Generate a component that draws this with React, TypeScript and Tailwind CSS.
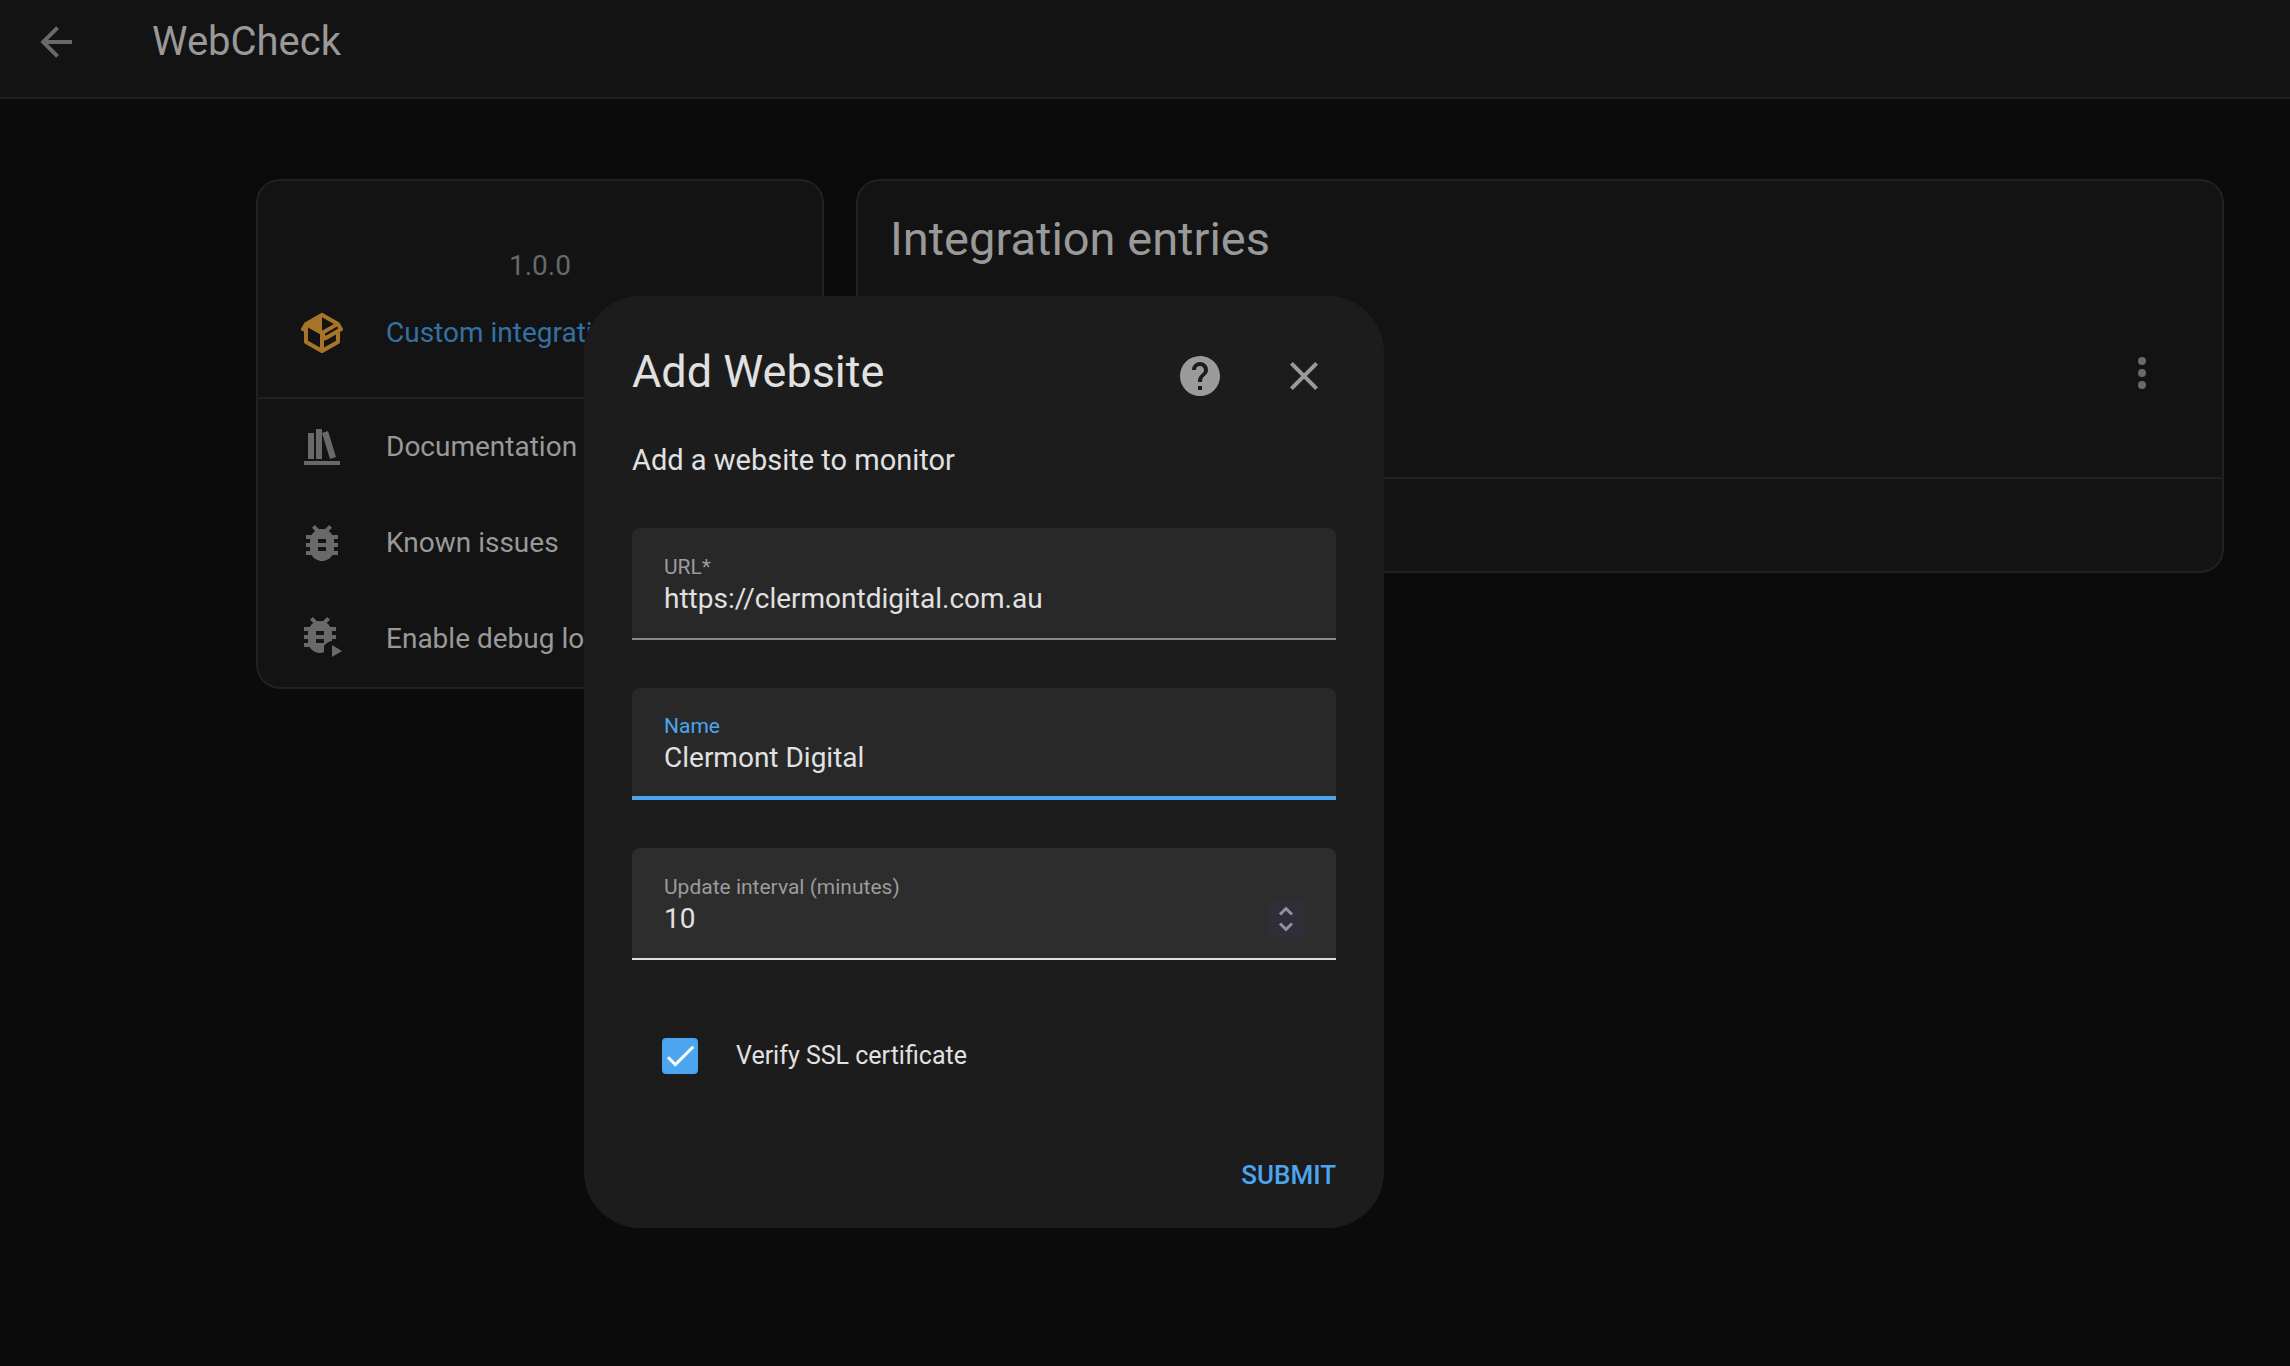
import React, { useState } from "react";

const paths = {
  back: "M20,11V13H8L13.5,18.5L12.08,19.92L4.16,12L12.08,4.08L13.5,5.5L8,11H20Z",
  packageVariant:
    "M2,10.96C1.5,10.68 1.35,10.07 1.63,9.59L3.13,7C3.24,6.8 3.41,6.66 3.6,6.58L11.43,2.18C11.59,2.06 11.79,2 12,2C12.21,2 12.41,2.06 12.57,2.18L20.47,6.62C20.66,6.72 20.82,6.88 20.91,7.08L22.36,9.6C22.64,10.08 22.47,10.69 22,10.96L21,11.54V16.5C21,16.88 20.79,17.21 20.47,17.38L12.57,21.82C12.41,21.94 12.21,22 12,22C11.79,22 11.59,21.94 11.43,21.82L3.53,17.38C3.21,17.21 3,16.88 3,16.5V10.96C2.7,11.13 2.32,11.14 2,10.96M12,4.15V4.15L12,10.85V10.85L17.96,7.5L12,4.15M5,15.91L11,19.29V12.58L5,9.21V15.91M19,15.91V12.69L14,15.59C13.67,15.77 13.3,15.76 13,15.6V19.29L19,15.91M13.85,13.36L20.13,9.73L19.55,8.72L13.27,12.35L13.85,13.36Z",
  bookshelf:
    "M9 3V18H12V3H9M12 5L16 18L19 17L15 4L12 5M5 5V18H8V5H5M3 19V21H21V19H3Z",
  bug: "M14,12H10V10H14M14,16H10V14H14M20,8H17.19C16.74,7.22 16.12,6.55 15.37,6.04L17,4.41L15.59,3L13.42,5.17C12.96,5.06 12.5,5 12,5C11.5,5 11.04,5.06 10.59,5.17L8.41,3L7,4.41L8.62,6.04C7.88,6.55 7.26,7.22 6.81,8H4V10H6.09C6.04,10.33 6,10.66 6,11V12H4V14H6V15C6,15.34 6.04,15.67 6.09,16H4V18H6.81C7.85,19.79 9.78,21 12,21C14.22,21 16.15,19.79 17.19,18H20V16H17.91C17.96,15.67 18,15.34 18,15V14H20V12H18V11C18,10.66 17.96,10.33 17.91,10H20V8Z",
  bugPlay:
    "M13 16V15.5C13.86 14.22 15.28 13.25 17 12.83V12H19V10H17V9C17 8.66 16.96 8.33 16.91 8H19V6H16.19C15.74 5.22 15.12 4.55 14.37 4.04L16 2.41L14.59 1L12.42 3.17C11.96 3.06 11.5 3 11 3S10.04 3.06 9.59 3.17L7.41 1L6 2.41L7.62 4.04C6.88 4.55 6.26 5.22 5.81 6H3V8H5.09C5.04 8.33 5 8.66 5 9V10H3V12H5V13C5 13.34 5.04 13.67 5.09 14H3V16H5.81C6.85 17.79 8.78 19 11 19C11.7 19 12.38 18.87 13 18.65V16M13 14H9V12H13V14M13 10H9V8H13V10M17 15V21L22 18L17 15Z",
  help: "M15.07,11.25L14.17,12.17C13.45,12.89 13,13.5 13,15H11V14.5C11,13.39 11.45,12.39 12.17,11.67L13.41,10.41C13.78,10.05 14,9.55 14,9C14,7.89 13.1,7 12,7A2,2 0 0,0 10,9H8A4,4 0 0,1 12,5A4,4 0 0,1 16,9C16,9.88 15.64,10.67 15.07,11.25M13,19H11V17H13M12,2A10,10 0 0,0 2,12A10,10 0 0,0 12,22A10,10 0 0,0 22,12C22,6.47 17.5,2 12,2Z",
  close:
    "M19,6.41L17.59,5L12,10.59L6.41,5L5,6.41L10.59,12L5,17.59L6.41,19L12,13.41L17.59,19L19,17.59L13.41,12L19,6.41Z",
  dots: "M12,16A2,2 0 0,1 14,18A2,2 0 0,1 12,20A2,2 0 0,1 10,18A2,2 0 0,1 12,16M12,10A2,2 0 0,1 14,12A2,2 0 0,1 12,14A2,2 0 0,1 10,12A2,2 0 0,1 12,10M12,4A2,2 0 0,1 14,6A2,2 0 0,1 12,8A2,2 0 0,1 10,6A2,2 0 0,1 12,4Z",
};

function Icon({ d, className = "" }: { d: string; className?: string }) {
  return (
    <svg viewBox="0 0 24 24" fill="currentColor" aria-hidden="true" className={"size-12 shrink-0 " + className}>
      <path d={d} />
    </svg>
  );
}

function CardLink({ d, children }: { d: string; children: string }) {
  return (
    <a href="#" className="flex h-24 items-center gap-10 px-10 text-[28px] text-[#999999]">
      <Icon d={d} className="text-[#696969]" />
      <span className="truncate">{children}</span>
    </a>
  );
}

type FieldProps = {
  id: string;
  label: string;
  defaultValue: string;
  box: string;
  labelColor: string;
  children?: React.ReactNode;
};

function Field({ id, label, defaultValue, box, labelColor, children }: FieldProps) {
  return (
    <div className={"flex h-28 items-center rounded-t-lg px-8 " + box}>
      <div className="flex min-w-0 flex-1 flex-col pt-1">
        <label htmlFor={id} className={"text-[21px] leading-7 " + labelColor}>
          {label}
        </label>
        <input
          id={id}
          type="text"
          defaultValue={defaultValue}
          className="h-9 w-full appearance-none bg-transparent text-[28px] text-[#e1e1e1] outline-none"
        />
      </div>
      {children}
    </div>
  );
}

export default function App() {
  const [verify, setVerify] = useState(true);
  return (
    <div className="relative min-h-screen bg-[#0b0b0b] font-['Roboto',sans-serif]">
      <header className="flex h-[99px] items-start gap-18 border-b-2 border-[#212121] bg-[#131313] px-8 pt-[18px]">
        <button type="button" aria-label="Back" className="text-[#696969]">
          <Icon d={paths.back} />
        </button>
        <h1 className="text-[40px] leading-12 text-[#999999]">WebCheck</h1>
      </header>

      <main className="flex items-start gap-8 pt-20 pr-[66px] pl-64">
        <section className="w-[568px] shrink-0 overflow-hidden rounded-3xl border-2 border-[#212121] bg-[#131313]">
          <p className="pt-16 text-center text-[28px] leading-[42px] text-[#696969]">1.0.0</p>
          <a href="#" className="flex items-center gap-10 px-10 pt-[22px] pb-10 text-[28px] text-[#3371a3]">
            <Icon d={paths.packageVariant} className="text-[#a87428]" />
            <span className="truncate">Custom integration</span>
          </a>
          <nav className="border-t-2 border-[#212121]">
            <CardLink d={paths.bookshelf}>Documentation</CardLink>
            <CardLink d={paths.bug}>Known issues</CardLink>
            <CardLink d={paths.bugPlay}>Enable debug logging</CardLink>
          </nav>
        </section>

        <section className="min-w-0 flex-1 rounded-3xl border-2 border-[#212121] bg-[#131313]">
          <h2 className="px-8 pt-7 text-[47px] leading-[60px] text-[#999999]">Integration entries</h2>
          <div className="flex h-[210px] items-center justify-end border-b-2 border-[#212121] px-14">
            <button type="button" aria-label="Entry menu" className="text-[#696969]">
              <Icon d={paths.dots} />
            </button>
          </div>
          <div className="h-[92px]" />
        </section>
      </main>

      <form
        role="dialog"
        aria-labelledby="dialog-title"
        onSubmit={(e) => e.preventDefault()}
        className="absolute top-[296px] left-[584px] w-[800px] rounded-[56px] bg-[#1c1c1c] px-12 pb-7"
      >
        <div className="flex items-end pt-12">
          <h2 id="dialog-title" className="flex-1 text-[45px] leading-[56px] text-[#e1e1e1]">
            Add Website
          </h2>
          <div className="flex items-center gap-14 pr-2 text-[#9b9b9b]">
            <button type="button" aria-label="Help">
              <Icon d={paths.help} />
            </button>
            <button type="button" aria-label="Close">
              <Icon d={paths.close} />
            </button>
          </div>
        </div>
        <p className="pt-10 text-[29px] leading-10 text-[#e1e1e1]">Add a website to monitor</p>

        <div className="flex flex-col gap-12 pt-12">
          <Field
            id="url"
            label="URL*"
            defaultValue="https://clermontdigital.com.au"
            box="border-b-2 border-[#888888] bg-[#282828]"
            labelColor="text-[#9b9b9b]"
          />
          <Field
            id="name"
            label="Name"
            defaultValue="Clermont Digital"
            box="border-b-4 border-[#4ba6ef] bg-[#282828]"
            labelColor="text-[#4ba6ef]"
          />
          <Field
            id="interval"
            label="Update interval (minutes)"
            defaultValue="10"
            box="border-b-2 border-[#e1e1e1] bg-[#2d2d2d]"
            labelColor="text-[#9b9b9b]"
          >
            <button type="button" aria-label="Step value" className="mt-8 bg-[#2f2d38] text-[#93919b]">
              <svg viewBox="0 0 36 36" fill="none" stroke="currentColor" strokeWidth="3" aria-hidden="true" className="size-9">
                <path d="M12 13.5L18 7.5L24 13.5M12 22.5L18 28.5L24 22.5" />
              </svg>
            </button>
          </Field>
        </div>

        <label className="flex items-center gap-[38px] pt-[78px] pl-[30px] text-[25px] leading-9 text-[#e1e1e1]">
          <span className="grid size-9 place-items-center">
            <input
              type="checkbox"
              checked={verify}
              onChange={(e) => setVerify(e.target.checked)}
              className="col-start-1 row-start-1 size-9 appearance-none rounded border-4 border-[#9b9b9b] checked:border-[#4ba6ef] checked:bg-[#4ba6ef]"
            />
            {verify && (
              <svg viewBox="0 0 24 24" fill="none" stroke="#ffffff" strokeWidth="2" aria-hidden="true" className="pointer-events-none col-start-1 row-start-1 size-9">
                <path d="M4 12.8L8.9 17.7L20.8 5.8" />
              </svg>
            )}
          </span>
          Verify SSL certificate
        </label>

        <div className="flex justify-end pt-[76px]">
          <button type="submit" className="text-[26px] leading-[50px] font-medium text-[#4ba6ef] uppercase">
            Submit
          </button>
        </div>
      </form>
    </div>
  );
}
